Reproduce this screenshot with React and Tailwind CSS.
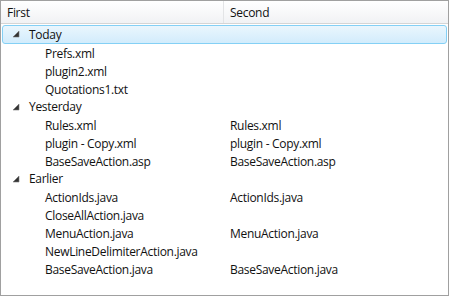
import React from "react";

const Tri = () => (
  <svg width="7" height="7" viewBox="0 0 7 7" className="shrink-0">
    <polygon points="6,0 6,6 0,6" fill="#333333" stroke="#7a7a7a" strokeWidth="0.6" />
  </svg>
);

const groups = [
  { name: "Today", items: [["Prefs.xml", ""], ["plugin2.xml", ""], ["Quotations1.txt", ""]] },
  { name: "Yesterday", items: [["Rules.xml", "Rules.xml"], ["plugin - Copy.xml", "plugin - Copy.xml"], ["BaseSaveAction.asp", "BaseSaveAction.asp"]] },
  { name: "Earlier", items: [["ActionIds.java", "ActionIds.java"], ["CloseAllAction.java", ""], ["MenuAction.java", "MenuAction.java"], ["NewLineDelimiterAction.java", ""], ["BaseSaveAction.java", "BaseSaveAction.java"]] },
];

export default function App() {
  return (
    <div className="w-[450px] h-[297px] bg-white text-[12px] tracking-[-0.3px] text-[#111]" style={{ fontFamily: "'Segoe UI', 'Open Sans', 'Noto Sans', sans-serif" }}>
      <div className="w-[449px] h-[296px] border border-[#a0a0a0] flex flex-col">
        <div className="h-[23px] flex border-b border-[#d5d5d5] bg-gradient-to-b from-white to-[#f1f2f4]">
          <div className="w-[223px] border-r border-[#e3e4e6] pl-[6px] pt-[2px] flex items-center">First</div>
          <div className="flex-1 pl-[6px] pt-[2px] flex items-center">Second</div>
        </div>
        <div className="flex flex-col pt-[1px]">
          {groups.map((g, gi) => (
            <React.Fragment key={g.name}>
              <div className={"h-[18px] flex items-center mx-[1px] " + (gi === 0 ? "border border-[#84d0f5] rounded-[3px] bg-gradient-to-b from-[#eaf6fd] to-[#d2ecfc] h-[19px]" : "border border-transparent")}>
                <div className="w-[26px] pl-[10px] flex items-center"><Tri /></div>
                <span className="leading-none">{g.name}</span>
              </div>
              {g.items.map(([a, b], i) => (
                <div key={i} className="h-[18px] flex items-center pt-[1px]">
                  <div className="w-[224px] pl-[44px]">{a}</div>
                  <div className="flex-1 pl-[5px]">{b}</div>
                </div>
              ))}
            </React.Fragment>
          ))}
        </div>
      </div>
    </div>
  );
}
